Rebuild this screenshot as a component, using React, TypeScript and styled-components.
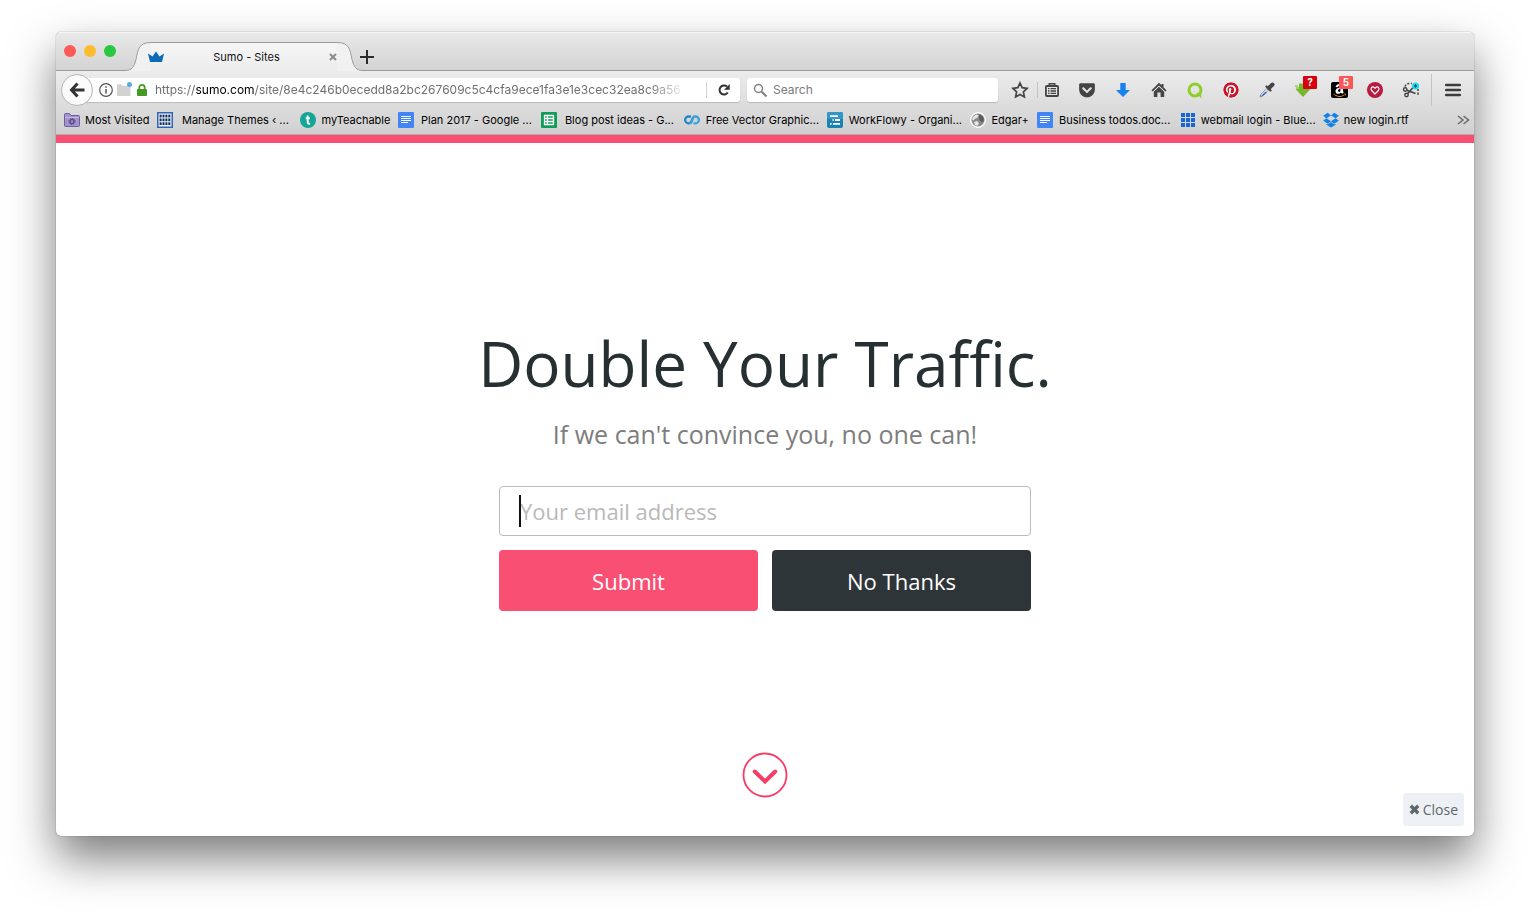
import React from "react";
import styled, { createGlobalStyle, css } from "styled-components";
import { FaPinterest, FaAmazon, FaGetPocket } from "react-icons/fa";

const GlobalStyle = createGlobalStyle`
  *, *::before, *::after { box-sizing: border-box; }
  body { margin: 0; background: #fff; }
  button, input { font: inherit; color: inherit; margin: 0; }
  button { border: 0; padding: 0; background: none; cursor: pointer; }
`;

const Desktop = styled.div`
  min-height: 100vh;
  padding: 32px 56px 80px;
  display: flex;
  flex-direction: column;
  font-family: Inter, "Liberation Sans", sans-serif;
  font-size: 11px;
  line-height: 16px;
  color: #111;
`;

const Window = styled.div`
  flex: 1;
  display: flex;
  flex-direction: column;
  border-radius: 5px;
  overflow: hidden;
  background: #fff;
  box-shadow: 0 0 1px rgba(0, 0, 0, 0.7), 0 22px 46px rgba(0, 0, 0, 0.52);
`;

/* ---------- tab strip ---------- */

const TabStrip = styled.div`
  height: 39px;
  padding-left: 8px;
  display: flex;
  align-items: flex-end;
  background: linear-gradient(#e9e9e9, #d3d3d3);
  box-shadow: inset 0 1px #f6f6f6, inset 0 -1px #9b9b9b;
`;

const Lights = styled.div`
  display: flex;
  gap: 8px;
  align-self: flex-start;
  padding-top: 13px;
`;

const Light = styled.button<{ $color: string }>`
  width: 12px;
  height: 12px;
  border-radius: 50%;
  background: ${(p) => p.$color};
`;

const Tab = styled.div`
  margin-left: 9px;
  width: 238px;
  height: 29px;
  display: flex;
`;

const TabEdge = styled.svg`
  width: 26px;
  height: 29px;
  flex: none;
`;

const TabBody = styled.div`
  flex: 1;
  display: flex;
  align-items: center;
  border-top: 1px solid #9b9b9b;
  background: linear-gradient(#f6f6f6, #ececec);

  svg { flex: none; }
  & > svg { margin-left: -3px; }
`;

const TabTitle = styled.span`
  flex: 1;
  text-align: center;
`;

const TabClose = styled.button`
  display: flex;
`;

const NewTab = styled.button`
  display: flex;
  margin: 0 0 6px -4px;
`;

/* ---------- navigation bar ---------- */

const Chrome = styled.div`
  background: linear-gradient(#ececec, #d0d0d0);
  border-bottom: 1px solid #ababab;
`;

const NavBar = styled.div`
  height: 38px;
  padding: 0 4px 0 5px;
  display: flex;
  align-items: center;
  font-size: 12px;
  color: #6f6f6f;
`;

const BackButton = styled.button`
  position: relative;
  z-index: 1;
  width: 32px;
  height: 32px;
  flex: none;
  display: flex;
  align-items: center;
  justify-content: center;
  border: 1px solid #b4b4b4;
  border-radius: 50%;
  background: #fbfbfb;
`;

const Field = styled.div`
  height: 24px;
  display: flex;
  align-items: center;
  border-radius: 3px;
  background: #fff;
  box-shadow: 0 1px 1px rgba(0, 0, 0, 0.16);
`;

const UrlField = styled(Field)`
  flex: 1;
  min-width: 0;
  margin-left: -12px;
  padding-left: 16px;

  & > svg { flex: none; }
`;

const UrlText = styled.div`
  flex: 1;
  min-width: 0;
  margin-left: 8px;
  margin-right: 20px;
  overflow: hidden;
  white-space: nowrap;
  mask-image: linear-gradient(to left, transparent, #000 36px);

  b { font-weight: 400; color: #000; }
`;

const Reload = styled.button`
  width: 34px;
  height: 16px;
  display: flex;
  align-items: center;
  justify-content: center;
  border-left: 1px solid #d5d5d5;
`;

const SearchField = styled(Field)`
  width: 251px;
  margin: 0 4px 0 7px;
  padding-left: 6px;
  gap: 5px;
`;

const SearchInput = styled.input`
  flex: 1;
  min-width: 0;
  border: 0;
  padding: 0;
  outline: 0;
  background: none;

  &::placeholder { color: #7a7a7a; opacity: 1; }
`;

const Tool = styled.button<{ $narrow?: boolean }>`
  position: relative;
  width: ${(p) => (p.$narrow ? 34 : 36)}px;
  height: 32px;
  flex: none;
  display: flex;
  align-items: center;
  justify-content: center;
  color: #444;
`;

const Divider = styled.span<{ $tall?: boolean }>`
  flex: none;
  width: 1px;
  height: ${(p) => (p.$tall ? 32 : 16)}px;
  margin-left: ${(p) => (p.$tall ? 2 : -1)}px;
  margin-right: ${(p) => (p.$tall ? 4 : -3)}px;
  background: #c3c3c3;
`;

const Badge = styled.span<{ $color: string }>`
  position: absolute;
  top: 2px;
  right: 4px;
  width: 14px;
  height: 13px;
  border-radius: 1px;
  background: ${(p) => p.$color};
  color: #fff;
  font-size: 10px;
  font-weight: 700;
  line-height: 13px;
  text-align: center;
`;

const BlackTile = styled.span`
  width: 17px;
  height: 16px;
  border-radius: 2px;
  display: flex;
  align-items: center;
  justify-content: center;
  background: #000;
`;

/* ---------- bookmarks ---------- */

const Bookmarks = styled.nav`
  height: 25px;
  padding: 0 4px 4px 8px;
  display: flex;
  align-items: center;
  overflow: hidden;
`;

const Bookmark = styled.a<{ $wide?: boolean }>`
  flex: none;
  height: 16px;
  display: flex;
  align-items: center;
  gap: 5px;
  padding-right: 8px;
  color: #000;
  text-decoration: none;
  white-space: nowrap;

  svg { flex: none; }
  ${(p) =>
    p.$wide &&
    css`
      width: 143px;
      span { flex: 1; text-align: center; }
    `}
`;

const Overflow = styled.button`
  margin-left: auto;
  display: flex;
`;

/* ---------- page ---------- */

const Page = styled.main`
  position: relative;
  flex: 1;
  display: flex;
  flex-direction: column;
  align-items: center;
  padding-bottom: 38px;
  border-top: 8px solid #f94f73;
  font-family: "Open Sans", "Noto Sans", sans-serif;
`;

const Hero = styled.section`
  flex: 1;
  padding-top: 36px;
  display: flex;
  flex-direction: column;
  align-items: center;
  justify-content: center;
  text-align: center;
`;

const Title = styled.h1`
  margin: 0;
  font-size: 62px;
  line-height: 84px;
  font-weight: 400;
  color: #263033;
`;

const Subtitle = styled.p`
  margin: 12px 0 35px;
  font-size: 25px;
  line-height: 34px;
  color: #7d7d7d;
`;

const Form = styled.form`
  width: 532px;
  max-width: 100%;
  display: grid;
  grid-template-columns: 1fr 1fr;
  gap: 14px;
`;

const EmailBox = styled.label`
  position: relative;
  grid-column: 1 / -1;
  display: flex;
`;

const EmailInput = styled.input`
  width: 100%;
  height: 50px;
  padding: 0 20px;
  border: 1px solid #bcbcbc;
  border-radius: 4px;
  outline: 0;
  background: #fff;
  font-size: 22px;

  &::placeholder { color: #b9b9b9; opacity: 1; }
`;

const Caret = styled.span`
  position: absolute;
  left: 20px;
  top: 9px;
  width: 2px;
  height: 32px;
  background: #111;
`;

const FormButton = styled.button<{ $color: string }>`
  height: 61px;
  padding-top: 1px;
  border-radius: 4px;
  background: ${(p) => p.$color};
  color: #fff;
  font-size: 22px;
`;

const ScrollButton = styled.button`
  display: flex;
`;

const CloseButton = styled.button`
  position: absolute;
  right: 10px;
  bottom: 10px;
  height: 33px;
  padding: 0 6px;
  display: flex;
  align-items: center;
  gap: 3px;
  border-radius: 3px;
  background: #edf1f5;
  color: #5d686c;
  font-size: 14px;
`;

/* ---------- icons ---------- */

const FolderIcon = () => (
  <svg width="16" height="16" viewBox="0 0 16 16">
    <path d="M.5 13.5v-11q0-1 1-1h4l1.500 2h7.500q1 0 1 1v9q0 1-1 1h-13q-1 0-1-1z" fill="#a293cb" stroke="#6d5fa0" />
    <path d="M1 5.500h14" stroke="#c5b9e3" />
    <circle cx="8" cy="9.500" r="2" fill="none" stroke="#5a4b8c" strokeWidth="1.400" />
    <circle cx="8" cy="9.500" r="3.100" fill="none" stroke="#5a4b8c" strokeDasharray="1.200 1.235" />
  </svg>
);

const GridIcon = ({ framed }: { framed?: boolean }) => (
  <svg width="16" height="16" viewBox="0 0 16 16">
    {framed && <rect x=".75" y=".75" width="14.500" height="14.500" fill="#e9f0f8" stroke="#3264b4" strokeWidth="1.500" />}
    {[0, 1, 2].map((r) =>
      (framed ? [0, 1, 2, 3] : [0, 1, 2]).map((c) =>
        framed ? (
          <rect key={`${r}${c}`} x={2.6 + c * 2.9} y={2.7 + r * 3.8} width="2" height="2.700" fill="#12305f" />
        ) : (
          <rect key={`${r}${c}`} x={1 + c * 5} y={1 + r * 5} width="4" height="4" fill="#1b66cf" />
        )
      )
    )}
  </svg>
);

const TeachableIcon = () => (
  <svg width="16" height="16" viewBox="0 0 16 16">
    <circle cx="8" cy="8" r="8" fill="#14a596" />
    <path d="M7.700 3.500v6.700q0 1.500 1.600 1.500h.8M5.700 6.300h4.200" fill="none" stroke="#fff" strokeWidth="1.900" />
  </svg>
);

const DocIcon = () => (
  <svg width="16" height="16" viewBox="0 0 16 16">
    <rect width="16" height="16" rx="1" fill="#4285f4" />
    <path d="M3 4.500h10M3 6.500h10M3 8.500h10M3 10.500h7" stroke="#fff" strokeWidth="1" />
  </svg>
);

const SheetIcon = () => (
  <svg width="16" height="16" viewBox="0 0 16 16">
    <rect width="16" height="16" rx="1" fill="#0f9d58" />
    <path d="M3.500 3.500h9v9h-9zM6.500 3.500v9M3.500 6.500h9M3.500 9.500h9" fill="none" stroke="#fff" strokeWidth="1.300" />
  </svg>
);

const VectorIcon = () => (
  <svg width="16" height="16" viewBox="0 0 16 16" fill="none" strokeWidth="2.300">
    <path d="M7 4.500H4.500a3.300 3.300 0 0 0 0 6.800q2.200 0 3-2L8.500 6.500q.8-2 2.500-2" stroke="#2487c8" />
    <path d="M5.500 11.300q1.500 0 2.200-1.800M9.500 11.300h2a3.400 3.400 0 0 0 0-6.800q-2 0-2.700 2l-1 3" stroke="#3aa1dc" />
  </svg>
);

const WorkflowyIcon = () => (
  <svg width="16" height="16" viewBox="0 0 16 16">
    <rect width="16" height="16" rx="2" fill="#1b82b4" />
    <path d="M0 2q0-2 2-2h12q2 0 2 2v5H0z" fill="#3496c6" />
    <path d="M3 4.200h8M5.500 8h1.200M8 8h5M3 11.800h1.500M6 11.800h7" stroke="#fff" strokeWidth="1.800" />
  </svg>
);

const GlobeIcon = () => (
  <svg width="16" height="16" viewBox="0 0 16 16">
    <circle cx="8" cy="8" r="7.500" fill="#f4f4f4" stroke="#fff" />
    <circle cx="8" cy="8" r="6.500" fill="#8a8a8a" />
    <path d="M3 5l3-2.500 2.500.5-1 2.500-3 1.500-.5 1.500-2-1zM4 10l3-1 2 2-1.500 3-2.500-1z" fill="#e6e6e6" />
    <path d="M9 2l4 2.500 1 4-2.500 2L9 7z" fill="#5c5c5c" />
  </svg>
);

const DropboxIcon = () => (
  <svg width="16" height="16" viewBox="0 0 16 16" fill="#1081e8">
    <path d="M4.800.8L8 3.400 3.300 6.300.2 3.800zM11.200.8l4.600 3-3.100 2.500L8 3.400zM3.300 6.300L8 9.200l-3.200 2.600-4.600-3zM12.700 6.300l3.100 2.500-4.600 3L8 9.200z" />
    <path d="M8 9.900l3.300 2.700 1.400-.9v1.100L8 15.600l-4.700-2.800v-1.100l1.400.9z" />
  </svg>
);

const bookmarks: { label: string; wide?: boolean; icon: React.ReactNode }[] = [
  { label: "Most Visited", icon: <FolderIcon /> },
  { label: "Manage Themes ‹ ...", wide: true, icon: <GridIcon framed /> },
  { label: "myTeachable", icon: <TeachableIcon /> },
  { label: "Plan 2017 - Google ...", wide: true, icon: <DocIcon /> },
  { label: "Blog post ideas - G...", wide: true, icon: <SheetIcon /> },
  { label: "Free Vector Graphic...", wide: true, icon: <VectorIcon /> },
  { label: "WorkFlowy - Organi...", wide: true, icon: <WorkflowyIcon /> },
  { label: "Edgar+", icon: <GlobeIcon /> },
  { label: "Business todos.doc...", wide: true, icon: <DocIcon /> },
  { label: "webmail login - Blue...", wide: true, icon: <GridIcon /> },
  { label: "new login.rtf", icon: <DropboxIcon /> },
];

export default function App() {
  return (
    <>
      <GlobalStyle />
      <Desktop>
        <Window>
          <TabStrip>
            <Lights>
              <Light $color="#fc5b57" aria-label="Close window" />
              <Light $color="#fdbc2e" aria-label="Minimize window" />
              <Light $color="#28c840" aria-label="Zoom window" />
            </Lights>
            <Tab>
              <TabEdge viewBox="0 0 26 29">
                <path d="M0 29v-.5C7 28.500 9 25 11 17.500C13 7 14 .5 26 .5V29z" fill="#f1f1f1" />
                <path d="M0 28.500C7 28.500 9 25 11 17.500C13 7 14 .5 26 .5" fill="none" stroke="#9b9b9b" />
              </TabEdge>
              <TabBody>
                <svg width="16" height="12" viewBox="0 0 16 12">
                  <path d="M0 2.500L4.500 5.500 8 .5l3.500 5L16 2.500 14 11H2z" fill="#0d6bb5" />
                </svg>
                <TabTitle>Sumo - Sites</TabTitle>
                <TabClose aria-label="Close tab">
                  <svg width="8" height="8" viewBox="0 0 8 8">
                    <path d="M1 1l6 6M7 1L1 7" stroke="#8b8b8b" strokeWidth="2" />
                  </svg>
                </TabClose>
              </TabBody>
              <TabEdge viewBox="0 0 26 29">
                <path d="M26 29v-.5C19 28.500 17 25 15 17.500C13 7 12 .5 0 .5V29z" fill="#f1f1f1" />
                <path d="M26 28.500C19 28.500 17 25 15 17.500C13 7 12 .5 0 .5" fill="none" stroke="#9b9b9b" />
              </TabEdge>
            </Tab>
            <NewTab aria-label="New tab">
              <svg width="16" height="16" viewBox="0 0 16 16">
                <path d="M8 1v14M1 8h14" stroke="#2c2c2c" strokeWidth="2" />
              </svg>
            </NewTab>
          </TabStrip>

          <Chrome>
            <NavBar>
              <BackButton aria-label="Back">
                <svg width="16" height="16" viewBox="0 0 16 16" fill="none" stroke="#333" strokeWidth="3">
                  <path d="M8.500 1.500L2.500 8l6 6.500M3 8h12.500" />
                </svg>
              </BackButton>
              <UrlField>
                <svg width="50" height="16" viewBox="0 0 50 16">
                  <circle cx="9" cy="8" r="6.300" fill="none" stroke="#555" strokeWidth="1.200" />
                  <path d="M9 7v4.500M9 4.300v1.500" stroke="#555" strokeWidth="1.500" />
                  <path d="M20 3q0-.7.700-.7h3.600l1 1.500H33.500V14H20z" fill="#d2d2d2" />
                  <circle cx="32.500" cy="2.500" r="2.500" fill="#5ea9df" />
                  <path d="M42.300 8V5.500a2.700 2.700 0 0 1 5.400 0V8" fill="none" stroke="#459a24" strokeWidth="1.800" />
                  <rect x="40" y="7" width="10" height="7" rx="1" fill="#459a24" />
                </svg>
                <UrlText>
                  https://<b>sumo.com</b>/site/8e4c246b0ecedd8a2bc267609c5c4cfa9ece1fa3e1e3cec32ea8c9a56
                </UrlText>
                <Reload aria-label="Reload">
                  <svg width="14" height="14" viewBox="0 0 14 14">
                    <path d="M10.800 9.500A4.500 4.500 0 1 1 10 3.600" fill="none" stroke="#333" strokeWidth="2" />
                    <path d="M12.700 1v5.700H7z" fill="#333" />
                  </svg>
                </Reload>
              </UrlField>
              <SearchField>
                <svg width="15" height="15" viewBox="0 0 15 15" fill="none" stroke="#808080">
                  <circle cx="5.500" cy="5.500" r="4" strokeWidth="1.500" />
                  <path d="M8.700 8.700l4.800 4.800" strokeWidth="2.200" />
                </svg>
                <SearchInput type="search" placeholder="Search" aria-label="Search" />
              </SearchField>
              <Tool aria-label="Bookmark this page">
                <svg width="18" height="18" viewBox="0 0 18 18">
                  <path d="M9 2l2.100 4.700 5.100.6-3.800 3.500 1 5.100L9 13.400l-4.400 2.500 1-5.100L1.800 7.300l5.100-.6z" fill="none" stroke="#444" strokeWidth="1.700" />
                </svg>
              </Tool>
              <Divider />
              <Tool $narrow aria-label="Bookmarks menu">
                <svg width="16" height="16" viewBox="0 0 16 16" fill="none" stroke="#444">
                  <rect x="1.900" y="4" width="12.200" height="10" rx="1" strokeWidth="1.800" />
                  <path d="M5.300 4V1.800h5.400V4" strokeWidth="1.500" />
                  <path d="M4 6.700h1.500M6.500 6.700H12M4 9h1.500M6.500 9H12M4 11.300h1.500M6.500 11.300H12" strokeWidth="1.300" />
                </svg>
              </Tool>
              <Tool aria-label="Pocket">
                <FaGetPocket size={18} />
              </Tool>
              <Tool aria-label="Downloads">
                <svg width="16" height="16" viewBox="0 0 16 16" fill="#1981ee">
                  <path d="M5.300 1h5.400v7H15l-7 7-7-7h4.300z" />
                </svg>
              </Tool>
              <Tool aria-label="Home">
                <svg width="16" height="16" viewBox="0 0 16 16" fill="#444">
                  <path d="M8 .8l2.500 2.500V2h2v3.300l3 3-1.200 1.200L8 3.400 1.700 9.500.5 8.300z" />
                  <path d="M2.800 9.800L8 4.800l5.200 5V15H9.600v-4.500H6.400V15H2.800z" />
                </svg>
              </Tool>
              <Tool aria-label="Q extension">
                <svg width="16" height="16" viewBox="0 0 16 16" fill="none" stroke="#8fce28" strokeWidth="3">
                  <circle cx="8" cy="8" r="6" />
                  <path d="M11 11.500h2.500v3z" fill="#8fce28" strokeWidth="1.500" />
                </svg>
              </Tool>
              <Tool aria-label="Pinterest">
                <FaPinterest size={16} color="#c8152b" style={{ background: "#fff", borderRadius: 8 }} />
              </Tool>
              <Tool aria-label="Color picker">
                <svg width="18" height="18" viewBox="0 0 18 18">
                  <path d="M2 16l.8-2.500L9 7.300 10.700 9 4.500 15.200z" fill="#dfe8f5" stroke="#777" strokeWidth=".8" />
                  <path d="M3 15l4.500-4.300 1.300 1.100L4.500 15z" fill="#2f63d8" />
                  <path d="M8.500 5.500l4 4" stroke="#444" strokeWidth="2.200" strokeLinecap="round" />
                  <path d="M11 7l3.500-3.500" stroke="#444" strokeWidth="4" strokeLinecap="round" />
                </svg>
              </Tool>
              <Tool aria-label="Video downloader">
                <svg width="16" height="16" viewBox="0 0 16 16">
                  <path d="M4 1.500h7.500V7h4L8 15 .5 7H4z" fill="#76b82a" />
                  <path d="M0 4h3M1 6h3" stroke="#95cb54" strokeWidth="1.500" />
                </svg>
                <Badge $color="#d8000c">?</Badge>
              </Tool>
              <Tool aria-label="Amazon assistant">
                <BlackTile>
                  <svg width="15" height="15" viewBox="0 0 15 15">
                    <defs>
                      <linearGradient id="amazonInk" x1="0" y1="0" x2="0" y2="1">
                        <stop offset=".74" stopColor="#fff" />
                        <stop offset=".74" stopColor="#f79a1c" />
                      </linearGradient>
                    </defs>
                    <FaAmazon size={15} fill="url(#amazonInk)" />
                  </svg>
                </BlackTile>
                <Badge $color="#fd5456">5</Badge>
              </Tool>
              <Tool aria-label="Wish list">
                <svg width="16" height="16" viewBox="0 0 16 16">
                  <circle cx="8" cy="8" r="8" fill="#b71c3f" />
                  <path d="M8 12L4.600 8.500C3 6.500 4.800 4.300 6.600 5L8 6.300 9.400 5c1.800-.7 3.600 1.500 2 3.500z" fill="none" stroke="#fff" strokeWidth="1.200" />
                </svg>
              </Tool>
              <Tool aria-label="Screenshot">
                <svg width="18" height="16" viewBox="0 0 18 16" fill="none" stroke="#444">
                  <path d="M3 4.500q1-3 4-3h3M16 7v4q0 2-1 3" strokeWidth="1.500" strokeDasharray="2 1.600" />
                  <circle cx="3.200" cy="7.500" r="1.700" strokeWidth="1.400" />
                  <circle cx="4.500" cy="13" r="1.700" strokeWidth="1.400" />
                  <path d="M5.500 11.700L11.500 5M4.800 8.200l8.700 3.300" strokeWidth="1.700" />
                  <circle cx="13.500" cy="4" r="3.500" fill="#18e0ee" stroke="none" />
                  <path d="M13.500 2v4M11.800 3l3.400 2M15.200 3l-3.400 2" strokeWidth=".9" stroke="#14646c" />
                </svg>
              </Tool>
              <Divider $tall />
              <Tool $narrow aria-label="Menu">
                <svg width="16" height="14" viewBox="0 0 16 14">
                  <path d="M1.200 2h13.600M1.200 7h13.600M1.200 12h13.600" stroke="#3c3c3c" strokeWidth="2.500" strokeLinecap="round" />
                </svg>
              </Tool>
            </NavBar>

            <Bookmarks aria-label="Bookmarks">
              {bookmarks.map((b) => (
                <Bookmark key={b.label} href="#" $wide={b.wide}>
                  {b.icon}
                  <span>{b.label}</span>
                </Bookmark>
              ))}
              <Overflow aria-label="More bookmarks">
                <svg width="13" height="10" viewBox="0 0 13 10" fill="none" stroke="#6c6c6c" strokeWidth="1.600">
                  <path d="M1 1l5 4-5 4M6.500 1l5 4-5 4" />
                </svg>
              </Overflow>
            </Bookmarks>
          </Chrome>

          <Page>
            <Hero>
              <Title>Double Your Traffic.</Title>
              <Subtitle>If we can't convince you, no one can!</Subtitle>
              <Form onSubmit={(e) => e.preventDefault()}>
                <EmailBox>
                  <EmailInput type="email" placeholder="Your email address" aria-label="Your email address" />
                  <Caret />
                </EmailBox>
                <FormButton type="submit" $color="#f94f73">Submit</FormButton>
                <FormButton type="button" $color="#2e3538">No Thanks</FormButton>
              </Form>
            </Hero>
            <ScrollButton aria-label="Scroll down">
              <svg width="46" height="46" viewBox="0 0 46 46" fill="none" stroke="#f53d66">
                <circle cx="23" cy="23" r="21.500" strokeWidth="1.800" />
                <path d="M12.800 19.500L23 29.500l10.200-10" strokeWidth="4" strokeLinecap="round" />
              </svg>
            </ScrollButton>
            <CloseButton>
              <svg width="11" height="11" viewBox="0 0 11 11">
                <path d="M1.800 1.800l7.400 7.400M9.200 1.800L1.800 9.200" stroke="#5d686c" strokeWidth="3.400" />
              </svg>
              Close
            </CloseButton>
          </Page>
        </Window>
      </Desktop>
    </>
  );
}
